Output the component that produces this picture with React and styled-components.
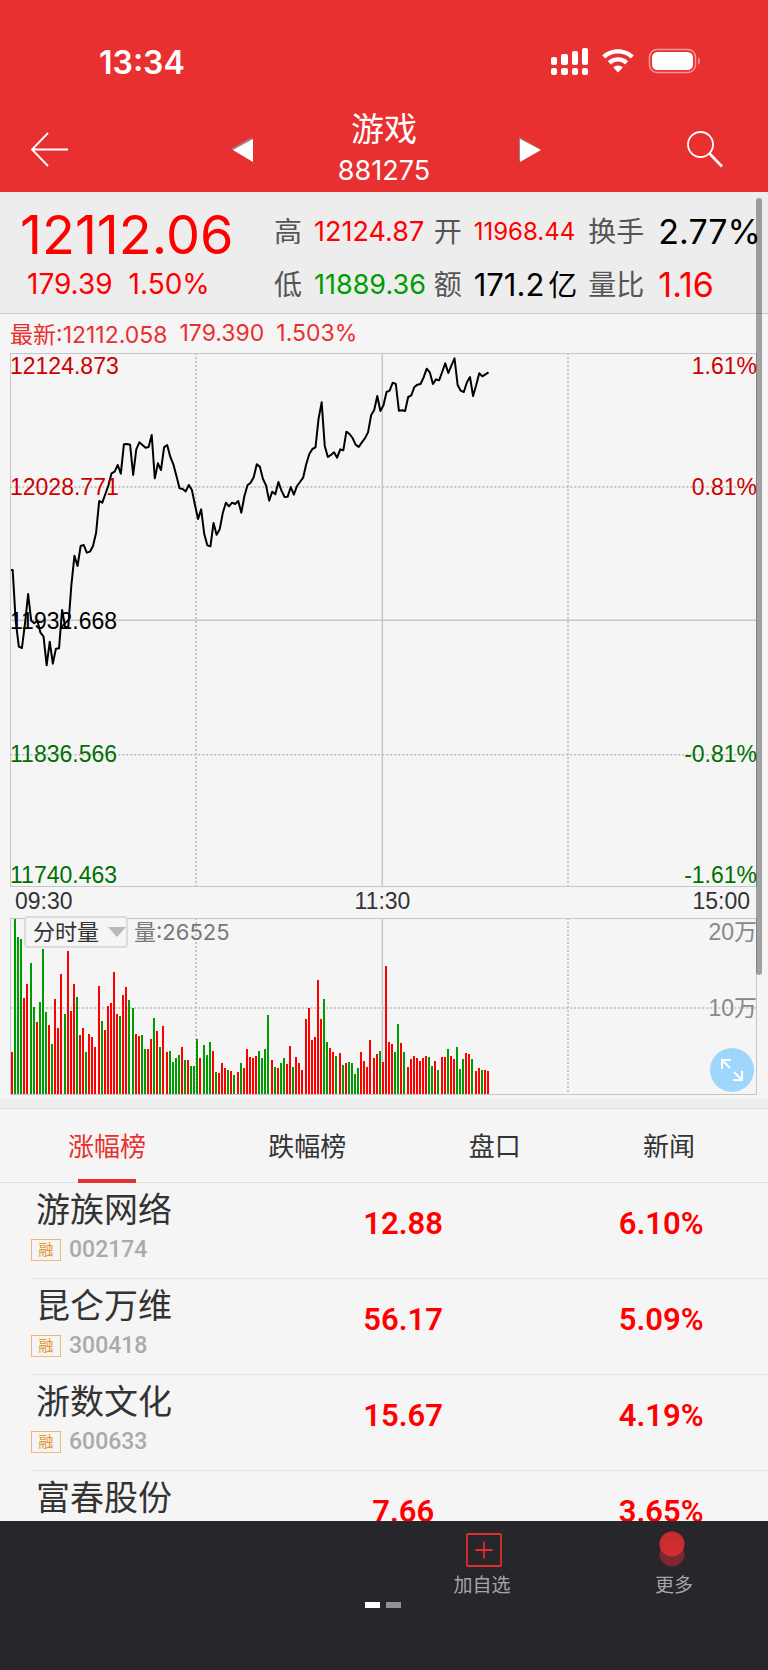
import React, { useState } from 'react';
import styled, { createGlobalStyle } from 'styled-components';

const SANS = `Inter, 'Noto Sans CJK SC', sans-serif`;
const CHART = `'Liberation Sans', 'Noto Sans CJK SC', sans-serif`;
const NUMERIC = `Roboto, 'Noto Sans CJK SC', sans-serif`;

// plot units per minute
const STEP = 9.27;

// one entry per minute since the open, in plot units from the top
const priceLine = [
    690, 845, 920, 924, 850, 762, 842, 850, 842, 878, 890, 976, 905, 971, 926, 925, 810, 862, 860, 735,
    647, 678, 618, 615, 638, 635, 618, 578, 483, 488, 462, 436, 400, 395, 375, 401, 313, 312, 314, 405,
    328, 307, 315, 323, 321, 285, 415, 370, 390, 322, 315, 350, 373, 408, 445, 447, 454, 435, 450, 495,
    537, 508, 582, 616, 619, 549, 584, 568, 519, 488, 499, 488, 492, 483, 518, 468, 436, 428, 412, 373,
    380, 417, 436, 482, 455, 463, 426, 452, 471, 470, 441, 464, 438, 426, 413, 373, 342, 327, 322, 236,
    187, 318, 351, 345, 337, 353, 328, 331, 275, 282, 294, 314, 321, 307, 295, 277, 226, 210, 168, 213,
    196, 156, 152, 128, 132, 212, 211, 213, 171, 166, 141, 134, 132, 112, 86, 97, 132, 118, 121, 96,
    70, 99, 76, 55, 135, 152, 156, 127, 111, 168, 136, 100, 109, 103, 97,
];

// top of each volume bar, negative marks a falling minute
const volumeBars = [
    607, -209, -262, -268, 446, 404, -339, -472, 517, -456, -298, -487, 526, -583, 448, 534, 373, -492, 305, 485,
    404, -442, 555, 536, -606, 553, 561, 591, 408, -515, 540, 469, 461, 368, 493, -498, 436, 411, -452, -474,
    553, 558, -557, -599, 597, 567, -505, 543, -591, 530, 608, -603, -637, -624, -616, 593, -632, 631, -649, -649,
    -569, 624, -587, -616, -578, 603, -667, 670, 641, 655, -660, 664, -676, 668, -641, 655, 597, 622, 626, 618,
    -603, -625, -597, -497, 631, -651, 656, -639, -624, 643, 589, -653, 622, 639, 660, 509, 474, 570, 562, 390,
    507, -448, -576, 595, 608, -619, 611, -645, 641, -636, -641, -672, -656, 608, 635, 653, 570, 626, 614, -604,
    637, 350, 576, 583, -608, -524, 581, -606, 651, 629, 619, 624, 633, 624, 620, -622, -649, 633, -662, 622,
    622, -599, 619, 629, -591, -657, -627, 610, 614, -629, 664, 656, -660, 661, 664,
];

const stats = [
    { label: '高', value: '12124.87', color: '#ff0000', size: 27 },
    { label: '开', value: '11968.44', color: '#ff0000', size: 24 },
    { label: '换手', value: '2.77%', color: '#000000', size: 34 },
    { label: '低', value: '11889.36', color: '#009b00', size: 27 },
    { label: '额', value: '171.2', unit: '亿', color: '#000000', size: 31 },
    { label: '量比', value: '1.16', color: '#ff0000', size: 34 },
];

const levels = [
    { price: '12124.873', change: '1.61%', color: '#cc0000', top: 0 },
    { price: '12028.771', change: '0.81%', color: '#cc0000', top: 121 },
    { price: '11932.668', color: '#000000', top: 255 },
    { price: '11836.566', change: '-0.81%', color: '#007000', top: 388 },
    { price: '11740.463', change: '-1.61%', color: '#007000', top: 509 },
];

const tabs = ['涨幅榜', '跌幅榜', '盘口', '新闻'];

const stocks = [
    { name: '游族网络', code: '002174', price: '12.88', change: '6.10%' },
    { name: '昆仑万维', code: '300418', price: '56.17', change: '5.09%' },
    { name: '浙数文化', code: '600633', price: '15.67', change: '4.19%' },
    { name: '富春股份', price: '7.66', change: '3.65%' },
];

const StatusIcons = () => (
    <svg width="150" height="28" viewBox="0 0 150 28" fill="#fff" aria-hidden="true">
        <rect x="0" y="9" width="6" height="8" rx="2" />
        <rect x="10" y="6" width="7" height="11" rx="2" />
        <rect x="21" y="3" width="6" height="14" rx="2" />
        <rect x="31" y="0" width="6" height="17" rx="2" />
        <rect x="0" y="20" width="6" height="7" rx="2" />
        <rect x="10" y="20" width="7" height="7" rx="2" />
        <rect x="21" y="20" width="6" height="7" rx="2" />
        <rect x="31" y="20" width="6" height="7" rx="2" />
        <path d="M67 1.200C73.100 1.200 78.700 3.500 82.700 7.400L79.700 10.400C76.400 7.200 71.900 5.500 67 5.500C62.100 5.500 57.600 7.200 54.300 10.400L51.300 7.400C55.300 3.500 60.900 1.200 67 1.200Z" />
        <path d="M67 9.200C70.900 9.200 74.500 10.700 77.200 13.200L74 16.400C72.100 14.700 69.700 13.600 67 13.600C64.300 13.600 61.900 14.700 60 16.400L56.800 13.200C59.500 10.700 63.100 9.200 67 9.200Z" />
        <path d="M67 17.600C68.800 17.600 70.500 18.300 71.700 19.400L67 24.600L62.300 19.400C63.500 18.300 65.200 17.600 67 17.600Z" />
        <rect x="98.500" y="1.500" width="46" height="23" rx="7.500" fill="none" stroke="#fff" strokeOpacity=".5" strokeWidth="1.500" />
        <rect x="101" y="4" width="41" height="18" rx="5.500" />
        <path d="M147.200 9.500C149.400 10.500 149.400 15.500 147.200 16.500Z" fillOpacity=".55" />
    </svg>
);

const MinuteChart = () => {
    const line = priceLine.map((y, i) => `${38 + i * STEP},${y}`).join(' ');
    return (
        <PlotSvg viewBox="33 42 2235 1596" preserveAspectRatio="none" aria-hidden="true">
            <path className="solid" d="M31 841H2271M1147 39V1641" />
            <path className="dotted" d="M31 441H2271M31 1244H2271M588 39V1641M1704 39V1641" />
            <polyline points={`33,690 ${line}`} />
        </PlotSvg>
    );
};

const VolumeChart = () => (
    <PlotSvg viewBox="33 208 2235 525" preserveAspectRatio="none" aria-hidden="true">
        <path className="solid" d="M1147 205V733" />
        <path className="dotted" d="M31 475H2271M588 205V733M1704 205V733" />
        {volumeBars.map((top, i) => (
            <rect
                key={i}
                x={33 + i * STEP}
                y={Math.abs(top)}
                width="6"
                height={733 - Math.abs(top)}
                fill={top < 0 ? '#009b00' : '#ff0000'}
            />
        ))}
    </PlotSvg>
);

const App = () => {
    const [activeTab, setActiveTab] = useState(tabs[0]);
    const [indicator, setIndicator] = useState('分时量');

    return (
        <Screen>
            <GlobalStyle />
            <Header>
                <StatusBar>
                    <time>13:34</time>
                    <StatusIcons />
                </StatusBar>
                <Nav>
                    <BackButton aria-label="返回">
                        <svg width="38" height="35" viewBox="0 0 38 35" fill="none" stroke="#fff" strokeWidth="1.800">
                            <path d="M37 17.500H1M17 1L1 17.500L17 34" />
                        </svg>
                    </BackButton>
                    <Switcher>
                        <IconButton aria-label="上一个">
                            <svg width="26" height="25" viewBox="0 0 26 25">
                                <path d="M21 0L0 12L21 24Z" fill="#a08080" />
                                <path d="M22 2L2 13L22 25Z" fill="#fff" />
                            </svg>
                        </IconButton>
                        <Title>
                            <h1>游戏</h1>
                            <span>881275</span>
                        </Title>
                        <IconButton aria-label="下一个">
                            <svg width="30" height="25" viewBox="-8 0 30 25">
                                <path d="M0 0L21 12L0 24Z" fill="#a08080" />
                                <path d="M1 2L22 13L1 25Z" fill="#fff" />
                            </svg>
                        </IconButton>
                    </Switcher>
                    <IconButton aria-label="搜索">
                        <svg width="36" height="37" viewBox="0 0 36 37" fill="none" stroke="#fff" strokeWidth="1.800">
                            <circle cx="13.500" cy="13.500" r="12.500" />
                            <path d="M22.500 22.500L35 35.500" strokeWidth="2.600" />
                        </svg>
                    </IconButton>
                </Nav>
            </Header>

            <Body>
                <Scroller>
                    <Quote>
                        <Latest>
                            <strong>12112.06</strong>
                            <p>
                                <span>179.39</span>
                                <span>1.50%</span>
                            </p>
                        </Latest>
                        <Stats>
                            {stats.map((item) => (
                                <React.Fragment key={item.label}>
                                    <dt>{item.label}</dt>
                                    <StatValue $color={item.color} $size={item.size}>
                                        {item.value}
                                        {item.unit && <small>{item.unit}</small>}
                                    </StatValue>
                                </React.Fragment>
                            ))}
                        </Stats>
                    </Quote>

                    <Ticker>
                        <span>最新:12112.058</span>
                        <span>179.390</span>
                        <span>1.503%</span>
                    </Ticker>

                    <Plot $height={534}>
                        <MinuteChart />
                        {levels.map((level) => (
                            <Level key={level.price} $color={level.color} $top={level.top}>
                                <span>{level.price}</span>
                                <span>{level.change}</span>
                            </Level>
                        ))}
                    </Plot>
                    <TimeAxis>
                        <span>09:30</span>
                        <span>11:30</span>
                        <span>15:00</span>
                    </TimeAxis>
                    <Plot $height={177}>
                        <VolumeChart />
                        <VolumeTools>
                            <SelectBox>
                                <select
                                    aria-label="指标"
                                    value={indicator}
                                    onChange={(e) => setIndicator(e.target.value)}
                                >
                                    <option>分时量</option>
                                </select>
                                <svg width="18" height="10" viewBox="0 0 18 10" aria-hidden="true">
                                    <path d="M0 0H18L9 10Z" fill="#b9b9b9" />
                                </svg>
                            </SelectBox>
                            <span>量:26525</span>
                        </VolumeTools>
                        <VolumeLevel $top={0}>20万</VolumeLevel>
                        <VolumeLevel $top={76}>10万</VolumeLevel>
                        <ExpandButton aria-label="全屏">
                            <svg width="22" height="22" viewBox="0 0 22 22" fill="none" stroke="#fff" strokeWidth="2">
                                <path d="M1 10V1H10M1 1L9 9M21 12V21H12M21 21L13 13" />
                            </svg>
                        </ExpandButton>
                    </Plot>

                    <Divider />
                    <Tabs role="tablist">
                        {tabs.map((tab) => (
                            <Tab
                                key={tab}
                                role="tab"
                                aria-selected={tab === activeTab}
                                $active={tab === activeTab}
                                onClick={() => setActiveTab(tab)}
                            >
                                {tab}
                            </Tab>
                        ))}
                    </Tabs>
                    <StockTable>
                        <tbody>
                            {stocks.map((stock) => (
                                <tr key={stock.name}>
                                    <td>
                                        <StockName>{stock.name}</StockName>
                                        {stock.code && (
                                            <StockCode>
                                                <em>融</em>
                                                {stock.code}
                                            </StockCode>
                                        )}
                                    </td>
                                    <td className="number">{stock.price}</td>
                                    <td className="number">{stock.change}</td>
                                </tr>
                            ))}
                        </tbody>
                    </StockTable>
                </Scroller>
                <ScrollThumb />
            </Body>

            <BottomBar>
                <Actions>
                    <ActionButton>
                        <svg width="40" height="34" viewBox="-4 0 40 34" fill="none" stroke="#e02e2e" strokeWidth="1.800">
                            <rect x="1" y="1" width="34" height="32" rx="1" />
                            <path d="M9.500 17H26.500M18 8.500V25.500" />
                        </svg>
                        加自选
                    </ActionButton>
                    <ActionButton>
                        <svg width="36" height="36" viewBox="0 4 36 36">
                            <circle cx="16" cy="25" r="12.500" fill="#7a292e" />
                            <circle cx="16" cy="15" r="12.500" fill="#c82c2f" />
                            <path d="M4.600 20A12.500 12.500 0 0 1 27.400 20A12.500 12.500 0 0 1 4.600 20Z" fill="#d42d30" />
                        </svg>
                        更多
                    </ActionButton>
                </Actions>
                <Pager>
                    <PagerDot $active />
                    <PagerDot />
                </Pager>
            </BottomBar>
        </Screen>
    );
};

const GlobalStyle = createGlobalStyle`
  * {
    box-sizing: border-box;
  }

  body {
    margin: 0;
    background: #f5f5f5;
    font-family: ${SANS};
  }

  button {
    padding: 0;
    border: none;
    background: none;
    color: inherit;
    font: inherit;
    cursor: pointer;
  }

  svg {
    display: block;
    flex-shrink: 0;
  }
`;

const Screen = styled.div`
  display: flex;
  flex-direction: column;
  height: 100vh;
`;

const Header = styled.header`
  background: #e93030;
  color: #fff;
`;

const StatusBar = styled.div`
  display: flex;
  justify-content: space-between;
  align-items: center;
  height: 100px;
  padding: 24px 67px 0 99px;

  time {
    font-size: 32px;
    font-weight: 600;
  }
`;

const Nav = styled.nav`
  display: flex;
  justify-content: space-between;
  align-items: center;
  height: 92px;
  padding: 6px 45px 0 31px;
`;

const IconButton = styled.button`
  display: flex;
  align-items: center;
`;

const BackButton = styled(IconButton)`
  width: 54px;
`;

const Switcher = styled.div`
  display: flex;
  justify-content: space-between;
  align-items: center;
  width: 310px;
`;

const Title = styled.div`
  padding-top: 2px;
  text-align: center;

  h1 {
    margin: 0;
    font-size: 33px;
    font-weight: 400;
    line-height: 42px;
  }

  span {
    display: block;
    font-size: 27px;
    line-height: 42px;
  }
`;

const Body = styled.main`
  position: relative;
  flex: 1;
  min-height: 0;
`;

const Scroller = styled.div`
  height: 100%;
  overflow-y: auto;
  scrollbar-width: none;
`;

const ScrollThumb = styled.div`
  position: absolute;
  top: 6px;
  right: 6px;
  width: 6px;
  height: 58.5%;
  border-radius: 3px;
  background: rgba(0, 0, 0, 0.34);
`;

const Quote = styled.section`
  display: flex;
  height: 122px;
  border-bottom: 1px solid #cbcbcb;
  background: #ededed;
`;

const Latest = styled.div`
  width: 274px;
  padding: 12px 0 0 20px;
  color: #ff0000;

  strong {
    display: block;
    font-size: 54px;
    font-weight: 400;
    line-height: 61px;
  }

  p {
    display: flex;
    gap: 16px;
    margin: 0;
    padding-left: 7px;
    font-size: 28px;
    line-height: 38px;
  }
`;

const Stats = styled.dl`
  flex: 1;
  display: grid;
  grid-template-columns: 40px minmax(0, 119fr) 40px minmax(0, 114fr) 70px minmax(0, 109fr);
  grid-auto-rows: 53px;
  align-items: center;
  margin: 0;
  padding-top: 13px;

  dt {
    padding-bottom: 3px;
    color: #555;
    font-size: 28px;
    white-space: nowrap;
  }
`;

const StatValue = styled.dd`
  margin: 0;
  color: ${({ $color }) => $color};
  font-size: ${({ $size }) => $size}px;
  line-height: 53px;
  white-space: nowrap;

  small {
    padding-left: 4px;
    font-size: 29px;
    line-height: 1;
  }
`;

const Ticker = styled.div`
  display: flex;
  align-items: center;
  gap: 12px;
  height: 39px;
  padding: 0 10px 1px;
  color: #e93030;
  font-size: 23px;
`;

const Plot = styled.div`
  position: relative;
  height: ${({ $height }) => $height}px;
  margin: 0 11px 0 10px;
  border: 1px solid #c6c6c6;
  font-family: ${CHART};
  font-size: 23px;
`;

const PlotSvg = styled.svg`
  width: 100%;
  height: 100%;

  path,
  polyline {
    fill: none;
    vector-effect: non-scaling-stroke;
  }

  .solid {
    stroke: #c6c6c6;
    stroke-width: 1.5;
  }

  .dotted {
    stroke: #b8b8b8;
    stroke-width: 1.5;
    stroke-dasharray: 2 2;
  }

  polyline {
    stroke: #000;
    stroke-width: 2;
    stroke-linejoin: round;
  }

  rect {
    shape-rendering: crispEdges;
  }
`;

const Level = styled.div`
  position: absolute;
  top: ${({ $top }) => $top}px;
  left: -1px;
  right: -1px;
  display: flex;
  justify-content: space-between;
  color: ${({ $color }) => $color};
  line-height: 24px;
`;

const TimeAxis = styled.div`
  display: grid;
  grid-template-columns: 1fr auto 1fr;
  height: 31px;
  padding: 0 18px 0 15px;
  color: #333;
  font-family: ${CHART};
  font-size: 23px;
  line-height: 29px;

  span:last-child {
    text-align: right;
  }
`;

const VolumeTools = styled.div`
  position: absolute;
  top: -3px;
  left: 13px;
  display: flex;
  align-items: center;
  gap: 6px;
  color: #777;
  font-family: ${SANS};
  font-size: 22px;
  line-height: 28px;
`;

const SelectBox = styled.label`
  position: relative;

  select {
    display: block;
    width: 104px;
    height: 32px;
    padding: 0 0 0 7px;
    border: 2px solid #dcdcdc;
    border-radius: 4px;
    background: #f5f5f5;
    color: #333;
    font: inherit;
    appearance: none;
  }

  svg {
    position: absolute;
    top: 11px;
    right: 2px;
    pointer-events: none;
  }
`;

const VolumeLevel = styled.span`
  position: absolute;
  top: ${({ $top }) => $top}px;
  right: -1px;
  color: #888;
  line-height: 26px;
`;

const ExpandButton = styled.button`
  position: absolute;
  right: 2px;
  bottom: 2px;
  display: grid;
  place-items: center;
  width: 44px;
  height: 44px;
  border-radius: 50%;

  && {
    background: #9fd6fb;
  }
`;

const Divider = styled.div`
  height: 10px;
  margin-top: 4px;
  border-bottom: 1px solid #dedede;
  background: #ededed;
`;

const Tabs = styled.div`
  display: flex;
  justify-content: space-between;
  height: 74px;
  padding: 0 73px 0 68px;
  border-bottom: 1px solid #dedede;
`;

const Tab = styled.button`
  position: relative;
  height: 74px;

  && {
    padding-bottom: 4px;
    color: ${({ $active }) => ($active ? '#e93030' : '#333')};
    font-size: 26px;
  }

  &::after {
    content: '';
    position: absolute;
    left: 10px;
    right: 10px;
    bottom: 0;
    height: 4px;
    background: ${({ $active }) => ($active ? '#e93030' : 'transparent')};
  }
`;

const StockTable = styled.table`
  width: calc(100% - 31px);
  margin-left: 31px;
  border-spacing: 0;
  table-layout: fixed;

  td {
    height: 96px;
    padding: 0;
    border-bottom: 1px solid #e2e2e2;
    vertical-align: top;
  }

  td:first-child {
    width: 30%;
  }

  td:last-child {
    width: 29%;
  }

  .number {
    padding-top: 18px;
    color: #ff0000;
    font-family: ${NUMERIC};
    font-size: 31px;
    font-weight: 600;
    line-height: 46px;
    text-align: center;
  }
`;

const StockName = styled.div`
  padding: 3px 0 0 5px;
  color: #333;
  font-size: 34px;
  line-height: 48px;
`;

const StockCode = styled.div`
  display: flex;
  align-items: center;
  gap: 8px;
  color: #aaa;
  font-family: ${NUMERIC};
  font-size: 23px;
  font-weight: 500;
  line-height: 32px;

  em {
    width: 30px;
    height: 22px;
    border: 1px solid #f0b878;
    color: #e8932e;
    font-size: 15px;
    font-style: normal;
    font-weight: 400;
    line-height: 20px;
    text-align: center;
  }
`;

const BottomBar = styled.footer`
  display: flex;
  flex-direction: column;
  align-items: center;
  height: 149px;
  background: #26262b;
`;

const Actions = styled.div`
  display: grid;
  grid-template-columns: repeat(4, 1fr);
  width: 100%;

  button:first-child {
    grid-column: 3;
  }
`;

const ActionButton = styled.button`
  display: flex;
  flex-direction: column;
  align-items: center;
  justify-content: space-between;
  height: 78px;

  && {
    padding: 12px 0 0 4px;
    color: #a5a5a8;
    font-size: 19px;
    line-height: 26px;
  }

  svg {
    overflow: visible;
  }
`;

const Pager = styled.div`
  display: flex;
  gap: 6px;
  padding: 3px 2px 0 0;
`;

const PagerDot = styled.span`
  width: 15px;
  height: 6px;
  background: ${({ $active }) => ($active ? '#fff' : '#929296')};
`;

export default App;
